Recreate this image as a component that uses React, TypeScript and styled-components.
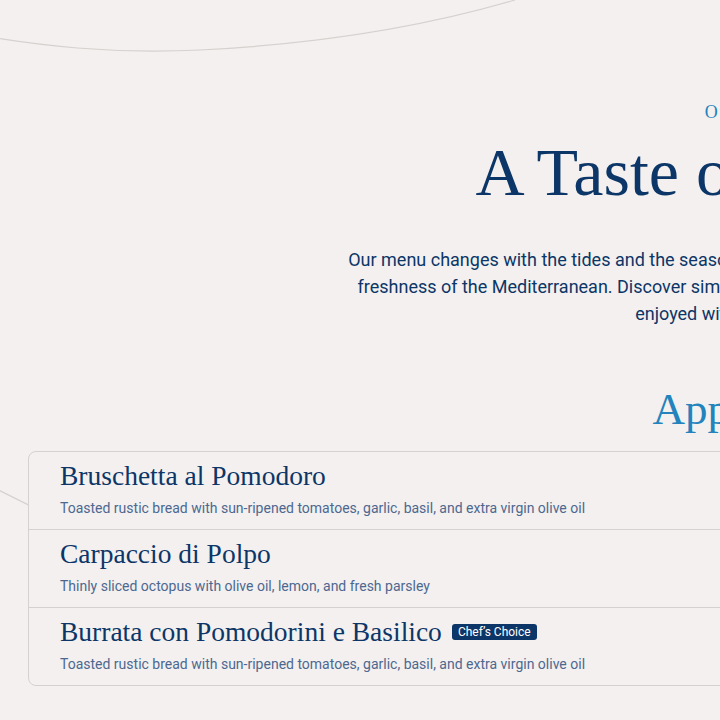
import React from "react";
import styled, { createGlobalStyle } from "styled-components";

const navy = "#0c3667";
const accent = "#2383bd";
const muted = "#4d6890";
const line = "#d6d1cf";
const paper = "#f3f0ef";

interface Dish {
    name: string;
    description: string;
    badge?: string;
}

const appetizers: Dish[] = [
    {
        name: "Bruschetta al Pomodoro",
        description:
            "Toasted rustic bread with sun-ripened tomatoes, garlic, basil, and extra virgin olive oil",
    },
    {
        name: "Carpaccio di Polpo",
        description: "Thinly sliced octopus with olive oil, lemon, and fresh parsley",
    },
    {
        name: "Burrata con Pomodorini e Basilico",
        description:
            "Toasted rustic bread with sun-ripened tomatoes, garlic, basil, and extra virgin olive oil",
        badge: "Chef’s Choice",
    },
];

const introLines = [
    "Our menu changes with the tides and the seasons, celebrating the best local catch of the day and the",
    "freshness of the Mediterranean. Discover simple, honest dishes meant to be shared, savoured, and",
    "enjoyed with friends & family",
];

const App: React.FC = () => {
    return (
        <>
            <GlobalStyle />
            <Page>
                <Waves viewBox="0 0 1500 720" aria-hidden="true">
                    <path d="M-60 28 C 40 48, 120 54, 200 50 C 320 44, 420 28, 515 0" />
                    <path d="M-80 450 C -40 470, 0 492, 80 530" />
                </Waves>
                <Header>
                    <Eyebrow>Our Menu</Eyebrow>
                    <Title>A Taste of the Coast</Title>
                    <Intro>
                        {introLines.map((text, i) => (
                            <IntroLine key={`intro-${i}`}>{text}</IntroLine>
                        ))}
                    </Intro>
                </Header>
                <Section>
                    <SectionTitle>Appetizers</SectionTitle>
                    <Card>
                        {appetizers.map((dish) => (
                            <Row key={dish.name}>
                                <NameLine>
                                    <DishName>{dish.name}</DishName>
                                    {dish.badge && <Badge>{dish.badge}</Badge>}
                                </NameLine>
                                <Description>{dish.description}</Description>
                            </Row>
                        ))}
                    </Card>
                </Section>
            </Page>
        </>
    );
};

const GlobalStyle = createGlobalStyle`
    html, body {
        margin: 0;
        padding: 0;
        background: ${paper};
        overflow: hidden;
    }
    * {
        box-sizing: border-box;
    }
`;

const Page = styled.main`
    position: relative;
    width: 1500px;
    min-height: 720px;
    padding: 102px 28px 40px;
    background: ${paper};
    font-family: Roboto, "Liberation Sans", sans-serif;
`;

const Waves = styled.svg`
    position: absolute;
    top: 0;
    left: 0;
    width: 1500px;
    height: 720px;
    fill: none;
    stroke: ${line};
    stroke-width: 1.2;
    pointer-events: none;
`;

const Header = styled.header`
    position: relative;
    display: flex;
    flex-direction: column;
    align-items: center;
    text-align: center;
`;

const Eyebrow = styled.span`
    font-family: "Liberation Serif", serif;
    font-size: 18px;
    line-height: 20px;
    letter-spacing: 2px;
    color: ${accent};
`;

const Title = styled.h1`
    margin: 13px 0 0;
    font-family: "Liberation Serif", serif;
    font-weight: 400;
    font-size: 68px;
    line-height: 75px;
    color: ${navy};
`;

const Intro = styled.p`
    margin: 36px 0 0;
    font-size: 18px;
    line-height: 27px;
    color: ${navy};
`;

const IntroLine = styled.span`
    display: block;
    white-space: nowrap;
`;

const Section = styled.section`
    position: relative;
    margin-top: 57px;
    display: flex;
    flex-direction: column;
    align-items: center;
`;

const SectionTitle = styled.h2`
    margin: 0 0 17px;
    font-family: "Liberation Serif", serif;
    font-weight: 400;
    font-size: 45px;
    line-height: 50px;
    color: ${accent};
`;

const Card = styled.div`
    align-self: stretch;
    border: 1px solid ${line};
    border-radius: 8px;
    background: ${paper};
`;

const Row = styled.article`
    display: flex;
    flex-direction: column;
    gap: 6px;
    padding: 8px 31px 11px;
    border-bottom: 1px solid ${line};
    &:last-child {
        border-bottom: none;
    }
`;

const NameLine = styled.div`
    display: flex;
    align-items: center;
    gap: 10px;
`;

const DishName = styled.h3`
    margin: 0;
    font-family: "Liberation Serif", serif;
    font-weight: 400;
    font-size: 27.5px;
    line-height: 32px;
    color: ${navy};
`;

const Badge = styled.span`
    padding: 1px 6px;
    border-radius: 3px;
    background: ${navy};
    color: #ffffff;
    font-size: 12px;
    line-height: 14px;
`;

const Description = styled.p`
    margin: 0;
    font-size: 14px;
    line-height: 20px;
    color: ${muted};
`;

export default App;
